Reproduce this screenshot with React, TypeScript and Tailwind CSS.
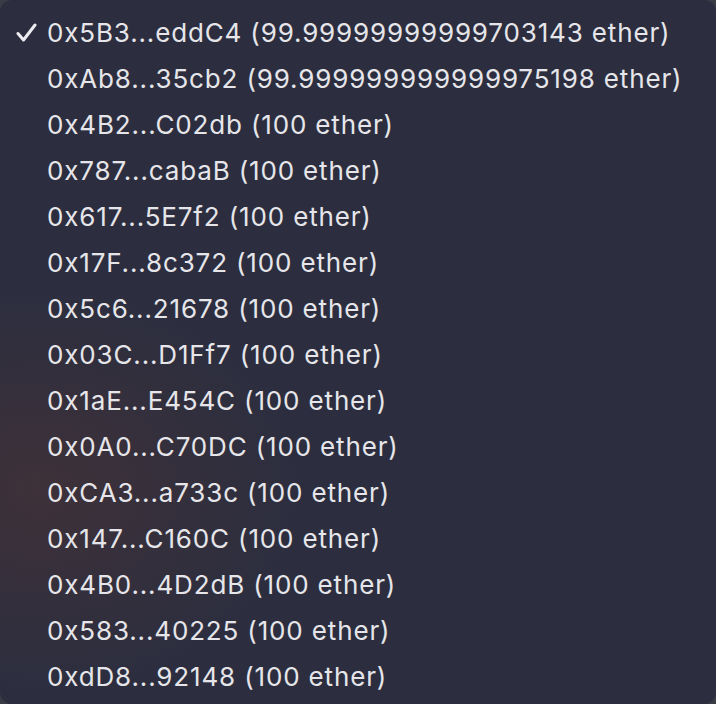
import React from "react";

const items: string[] = [
  "0x5B3...eddC4 (99.99999999999703143 ether)",
  "0xAb8...35cb2 (99.999999999999975198 ether)",
  "0x4B2...C02db (100 ether)",
  "0x787...cabaB (100 ether)",
  "0x617...5E7f2 (100 ether)",
  "0x17F...8c372 (100 ether)",
  "0x5c6...21678 (100 ether)",
  "0x03C...D1Ff7 (100 ether)",
  "0x1aE...E454C (100 ether)",
  "0x0A0...C70DC (100 ether)",
  "0xCA3...a733c (100 ether)",
  "0x147...C160C (100 ether)",
  "0x4B0...4D2dB (100 ether)",
  "0x583...40225 (100 ether)",
  "0xdD8...92148 (100 ether)",
];

function Check() {
  return (
    <svg width="22" height="20" viewBox="0 0 22 20" fill="none">
      <path
        d="M2 10.5 L7.5 17 L19 2"
        stroke="#ececf0"
        strokeWidth="3"
        strokeLinecap="round"
        strokeLinejoin="round"
      />
    </svg>
  );
}

export default function App() {
  return (
    <div className="w-[716px] h-[704px] bg-[#3a3b45] overflow-hidden">
      <div
        className="w-[716px] h-[704px] rounded-[12px] overflow-hidden bg-[#2c2e3f] bg-[radial-gradient(ellipse_260px_200px_at_40px_490px,#3e3139_0%,rgba(62,49,57,0)_100%)] pt-[10px] flex flex-col"
        style={{ fontFamily: "Inter, 'Noto Sans', sans-serif" }}
      >
        {items.map((t, i) => (
          <div key={i} className="h-[46px] flex items-center">
            <div className="w-[47px] flex justify-end pr-[9px]">
              {i === 0 ? <Check /> : null}
            </div>
            <span className="text-[26px] text-[#e6e6ea] leading-none whitespace-nowrap tracking-[0.85px]">
              {t}
            </span>
          </div>
        ))}
      </div>
    </div>
  );
}
